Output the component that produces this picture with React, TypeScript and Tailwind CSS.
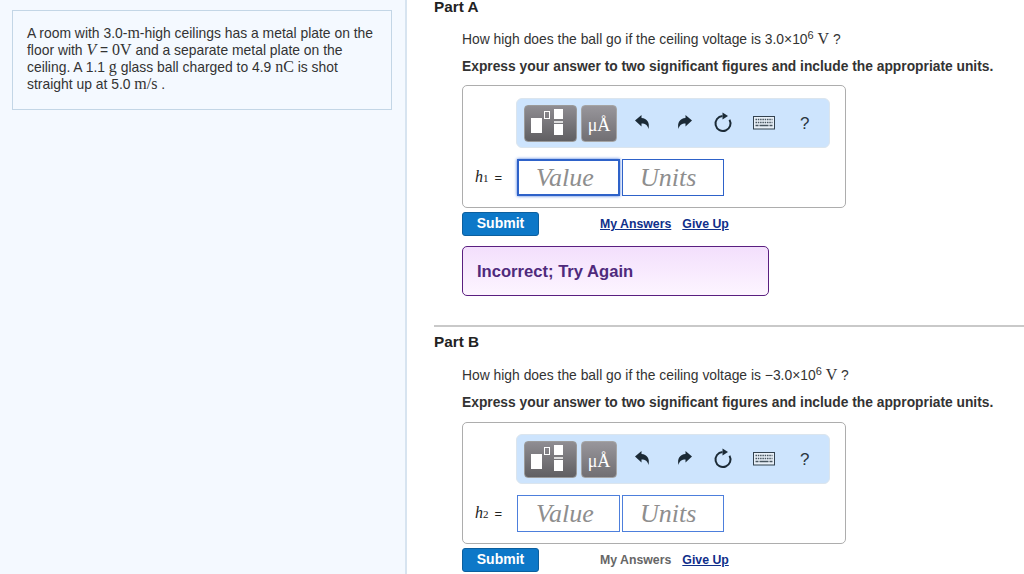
import React from "react";

const sans = "font-['Liberation_Sans',Arial,sans-serif]";
const M = ({ children, i }: { children: React.ReactNode; i?: boolean }) => (
  <span className={`font-['Liberation_Serif',serif] text-[16px] leading-[16px] ${i ? "italic" : ""}`}>{children}</span>
);

const Templates = () => (
  <div className="w-[53px] h-[37px] rounded-[4px] border border-[#9a9a9a] bg-gradient-to-b from-[#8f8d92] to-[#605f62] relative shrink-0">
    <svg width="53" height="37" viewBox="0 0 53 37" className="absolute -left-px -top-px">
      <rect x="7" y="13" width="11" height="15" fill="#fff" />
      <rect x="20.5" y="6.5" width="5" height="7" fill="none" stroke="#fff" strokeWidth="1" />
      <rect x="30" y="4" width="9" height="10" fill="#fff" />
      <rect x="30" y="16" width="9" height="2" fill="#ddd" />
      <rect x="30" y="19" width="9" height="11" fill="#fff" />
    </svg>
  </div>
);

const Toolbar = () => (
  <div className="ml-[53px] w-[314px] h-[50px] rounded-[6px] bg-[#cde4fd] border border-[#dbe5ee] flex items-center pl-[7px]">
    <Templates />
    <div className="ml-[4px] w-[36px] h-[37px] rounded-[4px] bg-gradient-to-b from-[#98969b] to-[#716f73] border border-[#a5a5a5] flex items-end justify-center pb-[7px] shrink-0">
      <span className="font-['Liberation_Serif',serif] text-[#fff] text-[18px] leading-[18px]">μÅ</span>
    </div>
    <svg width="18" height="18" viewBox="0 0 18 18" className="ml-[17px] shrink-0">
      <path d="M1 6.5 L7.5 1 L7.5 4 C13 4.5 16 8.5 14.5 15 C13.5 11 11.5 9.5 7.5 9.5 L7.5 12.5 Z" fill="#1b2a36" />
    </svg>
    <svg width="18" height="18" viewBox="0 0 18 18" className="ml-[23px] shrink-0">
      <path d="M17 6.5 L10.5 1 L10.5 4 C5 4.5 2 8.5 3.5 15 C4.5 11 6.5 9.5 10.5 9.5 L10.5 12.5 Z" fill="#1b2a36" />
    </svg>
    <svg width="20" height="22" viewBox="0 0 20 22" className="ml-[20px] shrink-0">
      <path d="M16.5 7.75 A7.5 7.5 0 1 1 9.5 4" fill="none" stroke="#1b2a36" strokeWidth="2" />
      <path d="M9.5 0.5 L15 4 L9.5 7.5 Z" fill="#1b2a36" />
    </svg>
    <svg width="22" height="14" viewBox="0 0 22 14" className="ml-[20px] shrink-0">
      <rect x="0.5" y="0.5" width="21" height="12.5" fill="#e8f0f8" stroke="#33424f" />
      <path d="M2.5 3.5h17M2.5 6.5h17" stroke="#47555f" strokeWidth="1.4" strokeDasharray="1.5 0.8" />
      <path d="M2.5 9.5h3M6.5 9.5h9M16.5 9.5h3" stroke="#47555f" strokeWidth="1.4" />
    </svg>
    <span className={`${sans} ml-[25px] text-[17px] text-[#2b3640] leading-none`}>?</span>
  </div>
);

const AnswerBox = ({ sub, focused, top, pad }: { sub: string; focused?: boolean; top: string; pad: string }) => (
  <div className={`ml-[28px] w-[384px] ${top} ${pad} pb-[11px] rounded-[5px] border border-[#adadad] bg-white`}>
    <Toolbar />
    <div className="flex items-center mt-[10px] h-[38px]">
      <span className="w-[54px] pl-[12px] flex items-baseline shrink-0 text-[#222]">
        <span className="font-['Liberation_Serif',serif] italic text-[16px]">h</span>
        <span className="font-['Liberation_Serif',serif] text-[11px]">{sub}</span>
        <span className={`${sans} ml-[6px] text-[13px]`}>=</span>
      </span>
      <div className={`w-[103px] h-[37px] bg-white border ${focused ? "border-[#2e62c9] shadow-[0_0_3px_#3f73dc] border-2" : "border-[#4d7fdc]"} flex items-center ${focused ? "pl-[17px]" : "pl-[18px]"} font-['Liberation_Serif',serif] italic text-[26px] text-[#8e8e8e]`}>
        Value
      </div>
      <div className={`ml-[2px] w-[102px] h-[37px] bg-white border ${focused ? "border-[#2e62c9]" : "border-[#4d7fdc]"} flex items-center pl-[17px] font-['Liberation_Serif',serif] italic text-[26px] text-[#8e8e8e]`}>
        Units
      </div>
    </div>
  </div>
);

const SubmitRow = ({ myLink }: { myLink: boolean }) => (
  <div className="ml-[28px] mt-[4px] flex items-center h-[24px]">
    <div className="w-[77px] h-[24px] rounded-[3px] bg-[#0d78c8] border border-[#0c5f9e] text-white font-bold text-[14px] flex items-center justify-center pb-px">
      Submit
    </div>
    <span className={`ml-[61px] font-bold text-[12.3px] ${myLink ? "text-[#0f2f8a] underline" : "text-[#666]"}`}>My Answers</span>
    <span className="ml-[11px] font-bold text-[12.3px] text-[#0f2f8a] underline">Give Up</span>
  </div>
);

const Question = ({ minus, part, head, q }: { minus?: boolean; part: string; head: string; q: string }) => (
  <>
    <h2 className={`${head} font-bold text-[15.3px] text-[#222]`}>Part {part}</h2>
    <p className={`ml-[28px] ${q} text-[13.86px] leading-[17px] h-[17px] text-[#333] whitespace-nowrap`}>
      How high does the ball go if the ceiling voltage is {minus ? "−" : ""}3.0×10
      <sup className="text-[11px] leading-none">6</sup> <M>V</M> ?
    </p>
    <p className="ml-[28px] mt-[11px] font-bold text-[13.8px] leading-[16px] text-[#333] whitespace-nowrap">
      Express your answer to two significant figures and include the appropriate units.
    </p>
  </>
);

export default function App() {
  return (
    <div className={`${sans} w-[1024px] h-[574px] overflow-hidden flex bg-white`}>
      <aside className="w-[407px] h-full shrink-0 bg-[#f4f9ff] border-r-2 border-[#d7e4f0] pl-[12px] pt-[10px]">
        <div className="w-[380px] h-[100px] border border-[#c3d6e6] pl-[14px] pt-[14px] text-[13.9px] leading-[17px] text-[#333]">
          <p className="whitespace-nowrap h-[17px]">A room with 3.0-<M>m</M>-high ceilings has a metal plate on the</p>
          <p className="whitespace-nowrap h-[17px]">floor with <M i>V</M> = <M>0V</M> and a separate metal plate on the</p>
          <p className="whitespace-nowrap h-[17px]">ceiling. A 1.1 <M>g</M> glass ball charged to 4.9 <M>nC</M> is shot</p>
          <p className="whitespace-nowrap h-[17px]">straight up at 5.0 <M>m/s</M> .</p>
        </div>
      </aside>
      <main className="flex-1 pl-[27px] min-w-0">
        <Question part="A" head="h-[13px] leading-[13px]" q="mt-[18px]" />
        <AnswerBox sub="1" focused top="mt-[10px]" pad="pt-[12px]" />
        <SubmitRow myLink />
        <div className="ml-[28px] mt-[10px] w-[307px] h-[50px] rounded-[5px] border border-[#5a1f80] bg-gradient-to-b from-[#f3dffc] to-[#fdf5ff] flex items-center pl-[14px] pt-[2px] font-bold text-[16.6px] text-[#4f2a7c]">
          Incorrect; Try Again
        </div>
        <div className="mt-[29px] h-[2px] bg-[#c9c9c9]" />
        <Question part="B" minus head="mt-[7px] h-[16px] leading-[16px]" q="mt-[17px]" />
        <AnswerBox sub="2" top="mt-[11px]" pad="pt-[11px]" />
        <SubmitRow myLink={false} />
      </main>
    </div>
  );
}
